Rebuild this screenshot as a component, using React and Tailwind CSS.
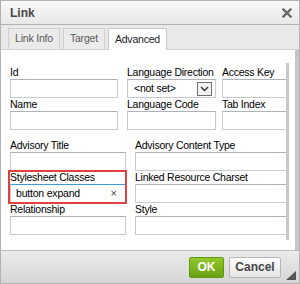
import { useState } from "react";

const font = { fontFamily: '"Liberation Sans", Arial, sans-serif' };

function Field({ label, value, className = "", children }) {
  return (
    <div className={"flex flex-col " + className}>
      <label className="text-[10.5px] tracking-[-0.25px] leading-[12px] text-black whitespace-nowrap">{label}</label>
      {children ? (
        children
      ) : (
        <input
          readOnly
          value={value || ""}
          className="mt-px h-[19px] w-full border border-[#c9cccf] border-t-[#aeb3b9] bg-white px-1 text-[11px] outline-none"
        />
      )}
    </div>
  );
}

export default function App() {
  const [tab] = useState("Advanced");
  const tabs = ["Link Info", "Target", "Advanced"];

  return (
    <div style={font} className="w-[300px] h-[284px] flex flex-col border border-[#b2b2b2] bg-white overflow-hidden">
      {/* Title bar */}
      <div className="h-[24px] shrink-0 flex items-center justify-between pl-[9px] pr-[7px] bg-gradient-to-b from-[#f8f8f8] to-[#e8e8e8] border-b border-[#b2b2b2]">
        <span className="text-[12px] font-bold text-[#474747]">Link</span>
        <svg width="10" height="10" viewBox="0 0 10 10">
          <path d="M1.5 1.5 L8.5 8.5 M8.5 1.5 L1.5 8.5" stroke="#6a6a6a" strokeWidth="2.4" strokeLinecap="square" />
        </svg>
      </div>

      {/* Tabs */}
      <div className="h-[25px] shrink-0 flex items-end gap-[3px] pl-[7px] bg-[#e9e9e9] border-b border-[#d0d0d0]">
        {tabs.map((t) => (
          <div
            key={t}
            className={
              "px-[6px] flex items-center text-[10.5px] tracking-[-0.2px] border border-b-0 " +
              (t === tab
                ? "bg-white border-[#c9c9c9] text-[#222] h-[22px] -mb-px"
                : "bg-[#ebebeb] border-[#cfcfcf] text-[#595959] h-[21px]")
            }
          >
            {t}
          </div>
        ))}
      </div>

      {/* Body */}
      <div className="flex-1 flex min-h-0">
        <div className="w-[285px] shrink-0 overflow-hidden pl-[9px] pt-[16px]">
          <div className="w-[300px] flex flex-col">
            <div className="flex gap-[9px]">
              <Field label="Id" className="w-[108px]" />
              <Field label="Language Direction" className="w-[89px]">
                <div className="mt-px h-[19px] border border-[#c9cccf] border-t-[#aeb3b9] bg-white flex items-center justify-between pl-[6px] pr-[3px]">
                  <span className="text-[10.5px] tracking-[-0.25px] text-black">&lt;not set&gt;</span>
                  <span className="w-[15px] h-[14px] border border-[#707070] bg-[#f2f2f2] flex items-center justify-center">
                    <svg width="9" height="6" viewBox="0 0 9 6">
                      <path d="M1 1 L4.5 4.5 L8 1" stroke="#333" strokeWidth="1.4" fill="none" />
                    </svg>
                  </span>
                </div>
              </Field>
              <Field label="Access Key" className="w-[80px] -ml-[3px]" />
            </div>
            <div className="flex gap-[9px]">
              <Field label="Name" className="w-[108px]" />
              <Field label="Language Code" className="w-[89px]" />
              <Field label="Tab Index" className="w-[80px] -ml-[3px]" />
            </div>

            <div className="flex gap-[9px] mt-[9px]">
              <Field label="Advisory Title" className="w-[116px]" />
              <Field label="Advisory Content Type" className="w-[170px]" />
            </div>
            <div className="flex gap-[9px]">
              <div className="relative w-[116px]">
                <Field label="Stylesheet Classes" className="w-[116px]">
                  <div className="mt-px h-[19px] border border-[#c9cccf] border-t-[#3b9ae0] bg-white flex items-center justify-between pl-[5px] pr-[8px]">
                    <span className="text-[10.5px] tracking-[-0.2px] text-black">button expand</span>
                    <span className="text-[11px] text-[#444]">×</span>
                  </div>
                </Field>
                <div className="absolute -left-[2px] -right-[1px] -top-[1px] -bottom-[1px] border-2 border-[#e04040] pointer-events-none"></div>
              </div>
              <Field label="Linked Resource Charset" className="w-[170px]" />
            </div>
            <div className="flex gap-[9px]">
              <Field label="Relationship" className="w-[116px]" />
              <Field label="Style" className="w-[170px]" />
            </div>
          </div>
        </div>
        <div className="w-[3px] shrink-0 mt-[13px] mb-[10px] bg-[#c8c8c8]"></div>
        <div className="flex-1 bg-white"></div>
        <div className="w-[4px] shrink-0 bg-[#c6c6c6]"></div>
      </div>

      {/* Footer */}
      <div className="h-[33px] shrink-0 flex items-center justify-end gap-[5px] pr-[18px] bg-gradient-to-b from-[#ebebeb] to-[#d6d6d6] border-t border-[#bdbdbd] relative">
        <button className="h-[21px] w-[35px] text-[12px] font-bold text-white border border-[#5c9a12] rounded-[2px] bg-gradient-to-b from-[#92c82a] to-[#6aa312]">
          OK
        </button>
        <button className="h-[21px] w-[52px] text-[12px] font-bold text-[#474747] border border-[#b6b6b6] rounded-[2px] bg-gradient-to-b from-[#ffffff] to-[#e4e4e4]">
          Cancel
        </button>
        <svg className="absolute right-[3px] bottom-[3px]" width="10" height="9" viewBox="0 0 10 9">
          <path d="M10 0 L10 9 L0 9 Z" fill="#555" />
        </svg>
      </div>
    </div>
  );
}
